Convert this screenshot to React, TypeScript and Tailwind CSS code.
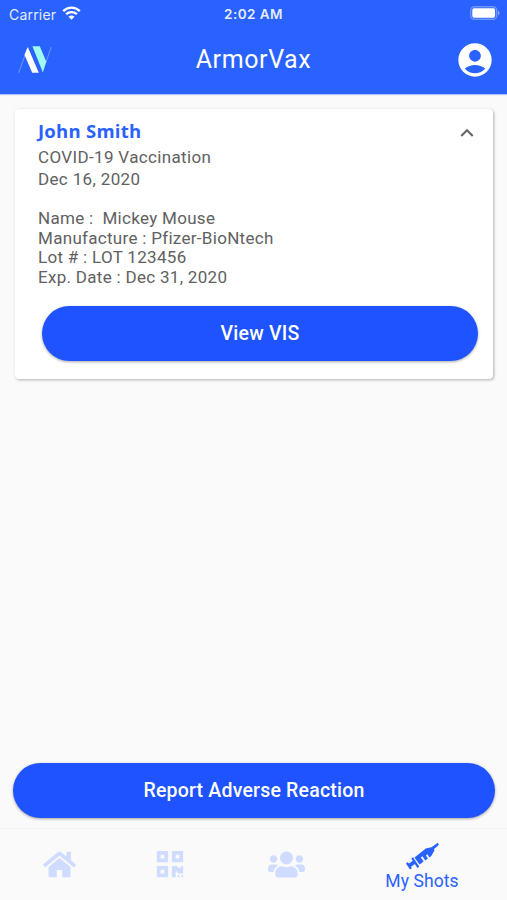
import type { ReactNode } from "react";
import { FaHome, FaQrcode, FaUsers } from "react-icons/fa";
import { MdAccountCircle, MdKeyboardArrowUp } from "react-icons/md";

function StatusBar() {
  return (
    <div className="grid h-[26px] grid-cols-3 items-center pt-[2px] pr-[7px] pl-[9px] font-['Inter','Liberation_Sans',sans-serif] text-[13.5px] text-[#e6edff]">
      <div className="flex items-center gap-[6px]">
        <span className="text-[14px] tracking-[0.2px]">Carrier</span>
        <svg className="-mt-[2px]" width="19" height="14" viewBox="0 0 19 14" fill="none" stroke="#fff">
          <path d="M1.2 5.1C5.9.5 13.1.5 17.8 5.1" strokeWidth="2.4" />
          <path d="M4.1 8.2c3.1-2.9 7.7-2.9 10.8 0" strokeWidth="2.3" />
          <path d="M9.5 13.7 6.5 10.7c1.7-1.5 4.3-1.5 6 0z" fill="#fff" stroke="none" />
        </svg>
      </div>
      <span className="-ml-[2px] pt-px text-center text-[13.5px] font-semibold tracking-[0.45px]">2:02 AM</span>
      <svg className="-mt-[2px] justify-self-end" width="30" height="14" viewBox="0 0 30 14">
        <rect x=".7" y=".7" width="26" height="12.6" rx="3.6" fill="none" stroke="#6f95ff" strokeWidth="1.4" />
        <rect x="2.3" y="2.3" width="22.8" height="9.4" rx="1.6" fill="#fff" />
        <path d="M28 4.6c2 .8 2 4 0 4.8z" fill="#88a8ff" />
      </svg>
    </div>
  );
}

function Logo() {
  return (
    <svg width="34" height="28" viewBox="0 0 34 28">
      <path d="M.7 26.8 9.4 2.5M24.5 26 33.3 1" stroke="#7fa3ff" strokeWidth=".8" />
      <path d="M9.8 1 20.8 26.8H14.2L6.5 8.8z" fill="#fff" />
      <path d="M14.4.2h7.4L28.2 15.6 24.8 26.2z" fill="#9ffaf0" />
    </svg>
  );
}

function Syringe() {
  return (
    <svg width="34" height="28" viewBox="0 0 34 28" fill="#2962ff">
      <path d="M33.9 2.4 32.7.8 31 2.1 26.8 5 28.4 7.4 32.4 4.2z" />
      <path d="M9.5 15.6 20.8 6.4 27.3 4.9 29.6 8.2 26.3 14.1 24.4 15.4 22.4 12.3 20.9 13.4 22.9 16.5 20.3 18.4 17.4 14.3 15.9 15.4 18.7 19.5 14.5 22.6z" />
      <path d="M6.3 16.6 8.1 15.3 14.3 24.7 12.4 26z" />
      <path d="M8.1 18.6 10.2 21.7 5.1 25.4 3 22.3z" />
      <path d="M1 21.4 2.8 20.1 6.9 26.2 5 27.5z" />
    </svg>
  );
}

function PillButton({ children }: { children: ReactNode }) {
  return (
    <button className="h-[55px] w-full rounded-full bg-[#1e53ff] pt-px text-[19.5px] font-medium tracking-[0.2px] text-white shadow-[0_1px_3px_rgba(0,0,0,0.35)]">
      {children}
    </button>
  );
}

function ShotCard() {
  return (
    <section className="mr-[14px] ml-[15px] mt-[15px] h-[270px] rounded-[4px] bg-white pt-[11px] pr-[15px] pl-[23px] shadow-[1px_1px_3px_rgba(0,0,0,0.3)]">
      <div className="flex justify-between">
        <div>
          <h2 className="font-['Open_Sans',sans-serif] text-[18.5px] leading-[22px] font-bold tracking-[0.25px] text-[#2962ff]">John Smith</h2>
          <p className="mt-[4px] text-[17px] leading-[22px] tracking-[0.35px]">
            COVID-19 Vaccination
            <br />
            Dec 16, 2020
          </p>
        </div>
        <MdKeyboardArrowUp className="-mr-[2px] size-[26px] text-[#666]" />
      </div>
      <p className="mt-[19px] text-[17px] leading-[19.6px] tracking-[0.3px] whitespace-pre">
        {"Name :  Mickey Mouse\nManufacture : Pfizer-BioNtech\nLot # : LOT 123456\nExp. Date : Dec 31, 2020"}
      </p>
      <div className="mt-[18.6px] ml-[4px]">
        <PillButton>View VIS</PillButton>
      </div>
    </section>
  );
}

export default function App() {
  return (
    <div className="flex h-[900px] w-[507px] flex-col overflow-hidden bg-[#fafafa] font-['Roboto',sans-serif] text-[#616161]">
      <header className="h-[94px] shrink-0 bg-[#2962ff] shadow-[0_1px_1px_rgba(41,98,255,0.35)]">
        <StatusBar />
        <div className="grid h-[67px] grid-cols-3 items-center pr-[15px] pl-[18px]">
          <Logo />
          <h1 className="pt-px pr-[3px] text-center text-[25px] tracking-[0.6px] text-white">ArmorVax</h1>
          <MdAccountCircle className="-mr-[3px] size-[40px] justify-self-end text-white" />
        </div>
      </header>
      <main className="flex flex-1 flex-col justify-between">
        <ShotCard />
        <div className="mb-[10px] pr-[12px] pl-[13px]">
          <PillButton>Report Adverse Reaction</PillButton>
        </div>
      </main>
      <nav className="flex h-[72px] shrink-0 border-t border-[#f3f4f4] text-[#d0dcff]">
        <div className="flex w-[118px] justify-center pt-[19px]">
          <FaHome className="size-[33px]" />
        </div>
        <div className="flex w-[104px] justify-center pt-[20px]">
          <FaQrcode className="size-[30px]" />
        </div>
        <div className="flex w-[128px] justify-center pt-[17px]">
          <FaUsers className="size-[37px]" />
        </div>
        <div className="flex flex-1 flex-col items-center pr-[13px] pt-[13px] text-[#2962ff]">
          <Syringe />
          <span className="text-[17.5px] leading-[22px] tracking-[0.1px]">My Shots</span>
        </div>
      </nav>
    </div>
  );
}
